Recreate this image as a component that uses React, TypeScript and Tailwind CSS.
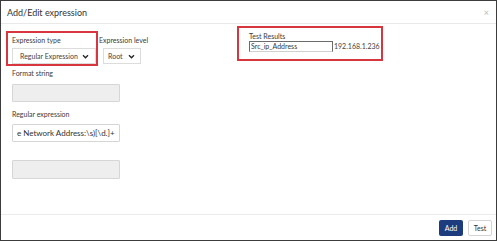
import React from "react";

const Chevron = () => (
  <svg width="7" height="5" viewBox="0 0 8 6" className="shrink-0">
    <path d="M1 1.5 L4 4.5 L7 1.5" fill="none" stroke="#222" strokeWidth="1.6" />
  </svg>
);

export default function App() {
  return (
    <div
      className="w-[497px] h-[241px] bg-white border border-[#3c3c3c] flex flex-col text-[#3a3a3a]"
      style={{ fontFamily: "Lato, 'Open Sans', sans-serif" }}
    >
      {/* header */}
      <div className="h-[23px] shrink-0 border-b border-[#e9e9e9] flex items-center justify-between pl-[6px] pr-[7px]">
        <span className="text-[9px] leading-none text-[#333]">Add/Edit expression</span>
        <span className="text-[9px] leading-none text-[#bbb]">×</span>
      </div>

      {/* body */}
      <div className="flex-1 flex pl-[5px] pt-[2px]">
        <div className="w-[231px] shrink-0 flex flex-col mt-[5px]">
          <div className="flex items-start">
            <div className="w-[92px] h-[35px] border-2 border-[#d8363f] pl-[4px] pt-[3px] flex flex-col">
              <span className="text-[7px] leading-[9px]">Expression type</span>
              <div className="mt-[3px] w-[84px] h-[16px] border border-[#dcdcdc] flex items-center justify-between pl-[7px] pr-[6px]">
                <span className="text-[7px] leading-none text-[#444]">Regular Expression</span>
                <Chevron />
              </div>
            </div>
            <div className="ml-[1px] pt-[5px] flex flex-col">
              <span className="text-[7px] leading-[9px]">Expression level</span>
              <div className="ml-[4px] mt-[3px] w-[38px] h-[16px] border border-[#dcdcdc] flex items-center justify-between pl-[4px] pr-[5px]">
                <span className="text-[7px] leading-none text-[#444]">Root</span>
                <Chevron />
              </div>
            </div>
          </div>
          <div className="pl-[6px] flex flex-col">
            <span className="mt-[3px] text-[7px] leading-[9px]">Format string</span>
            <div className="mt-[6px] w-[108px] h-[18px] bg-[#eeeeee] border border-[#d6d6d6] rounded-[1px]" />
            <span className="mt-[8px] text-[7px] leading-[9px]">Regular expression</span>
            <div className="mt-[5px] w-[108px] h-[18px] bg-white border border-[#d6d6d6] rounded-[1px] flex items-center pl-[4px] overflow-hidden">
              <span className="text-[8px] leading-none whitespace-nowrap text-[#333]">e Network Address:\s)[\d.]+</span>
            </div>
            <div className="mt-[18px] w-[108px] h-[19px] bg-[#eeeeee] border border-[#d6d6d6] rounded-[1px]" />
          </div>
        </div>

        <div className="w-[146px] h-[35px] border-2 border-[#d8363f] pl-[10px] pt-[4px] flex flex-col">
          <span className="text-[7px] leading-[8px]">Test Results</span>
          <div className="flex items-center mt-[1px]">
            <div className="w-[84px] h-[11px] border border-[#6b6b6b] border-b-[#d0d0d0] bg-white flex items-center pl-[1px]">
              <span className="text-[7px] leading-none">Src_ip_Address</span>
            </div>
            <span className="ml-[1px] text-[7px] leading-none text-[#444]">192.168.1.236</span>
          </div>
        </div>
      </div>

      {/* footer */}
      <div className="h-[26px] shrink-0 border-t border-[#ececec] flex items-start justify-end gap-[5px] pt-[5px] pr-[4px]">
        <div className="w-[24px] h-[16px] bg-[#1d3c7e] rounded-[2px] flex items-center justify-center">
          <span className="text-[7px] leading-none text-white">Add</span>
        </div>
        <div className="w-[24px] h-[16px] bg-white border border-[#d4d4d4] rounded-[2px] flex items-center justify-center">
          <span className="text-[7px] leading-none text-[#333]">Test</span>
        </div>
      </div>
    </div>
  );
}
